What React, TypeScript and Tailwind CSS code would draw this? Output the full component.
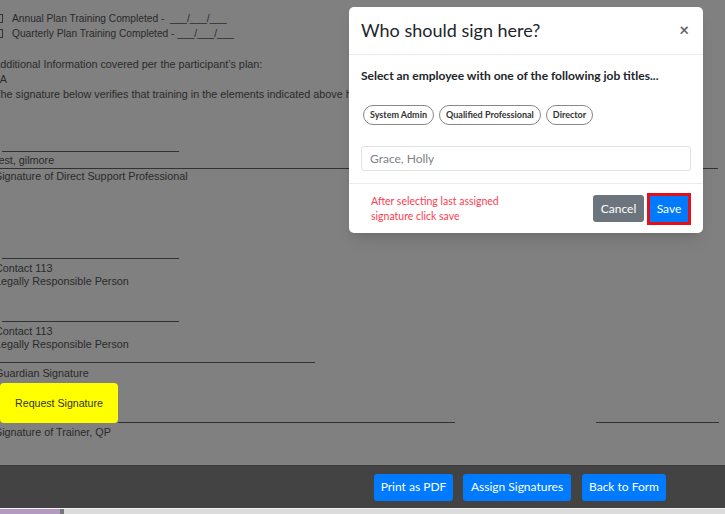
import React from 'react';

const lineClass = 'h-px bg-[#323232]';

function DocumentBody() {
  return (
    <div className="flex-1 -ml-[5px] pt-[11px] text-[10.8px] leading-[15px] text-[#2a2a2a]">
      <div className="-ml-[1px] flex items-center text-[10.2px]">
        <span className="h-[9px] w-[9px] border-[1.5px] border-[#333]" />
        <span className="ml-[9px]">Annual Plan Training Completed - &nbsp;___/___/___</span>
      </div>
      <div className="-ml-[1px] flex items-center text-[10.2px]">
        <span className="h-[9px] w-[9px] border-[1.5px] border-[#333]" />
        <span className="ml-[9px]">Quarterly Plan Training Completed - ___/___/___</span>
      </div>

      <div className="mt-[16px] -ml-[2px]">Additional Information covered per the participant’s plan:</div>
      <div className="-ml-[6px]">N/A</div>
      <div className="-ml-[1px] whitespace-nowrap">
        The signature below verifies that training in the elements indicated above has been completed and that all other requirements
      </div>

      <div className={`${lineClass} ml-[7px] mt-[49px] w-[177px]`} />
      <div className="w-[723px] border-b border-[#323232] pt-[1px]">
        <span className="-ml-[2px]">Test, gilmore</span>
      </div>
      <div>Signature of Direct Support Professional</div>

      <div className={`${lineClass} ml-[7px] mt-[74px] w-[177px]`} />
      <div className="pt-[3px] leading-[13px]">
        <div>Contact 113</div>
        <div>Legally Responsible Person</div>
      </div>

      <div className={`${lineClass} ml-[7px] mt-[33px] w-[177px]`} />
      <div className="pt-[3px] leading-[13px]">
        <div>Contact 113</div>
        <div>Legally Responsible Person</div>
      </div>

      <div className={`${lineClass} ml-[5px] mt-[11px] w-[315px]`} />
      <div className="pt-[3px] leading-[14px]">Guardian Signature</div>

      <div className="ml-[5px] mt-[3px] flex items-end">
        <button className="flex h-[40px] w-[118px] items-center justify-center rounded-[4px] bg-[#ffff00] text-[10.6px] text-[#333]">
          Request Signature
        </button>
        <div className={`${lineClass} w-[337px]`} />
        <div className={`${lineClass} ml-[141px] w-[123px]`} />
      </div>
      <div className="mt-[2px] leading-[14px]">Signature of Trainer, QP</div>
    </div>
  );
}

function SignModal() {
  const titles = ['System Admin', 'Qualified Professional', 'Director'];
  return (
    <div className="absolute left-[349px] top-[7px] w-[354px] rounded-[5px] bg-white font-['Lato',sans-serif] shadow-lg">
      <div className="flex h-[48px] items-center justify-between border-b border-[#e9ecef] pl-[12px] pr-[14px]">
        <h2 className="text-[18px] text-[#212529]">Who should sign here?</h2>
        <button className="-mt-[3px] text-[17px] font-bold leading-none text-[#666]">×</button>
      </div>
      <div className="px-[12px] pb-[12px] pt-[13px]">
        <p className="text-[12px] font-bold leading-[15px] text-[#212529]">
          Select an employee with one of the following job titles...
        </p>
        <div className="ml-[2px] mt-[22px] flex gap-[5px]">
          {titles.map((t) => (
            <span
              key={t}
              className="flex h-[20px] items-center rounded-full border border-[#888] px-[6px] text-[9px] font-bold text-[#333]"
            >
              {t}
            </span>
          ))}
        </div>
        <input
          className="mt-[21px] block h-[25px] w-full rounded-[3px] border border-[#dee2e6] px-[8px] text-[12px] text-[#495057] placeholder:text-[#7d8288] focus:outline-none"
          placeholder="Grace, Holly"
        />
      </div>
      <div className="flex h-[50px] items-center border-t border-[#e9ecef] pl-[22px] pr-[12px]">
        <p className="flex-1 text-[10.5px] leading-[15px] text-[#ff3b4e]">
          After selecting last assigned
          <br />
          signature click save
        </p>
        <button className="h-[27px] w-[51px] rounded-[3px] bg-[#6c757d] text-[12px] text-white">Cancel</button>
        <button className="ml-[3px] h-[32px] w-[44px] border-[3px] border-[#e3101c] bg-[#007bff] text-[12px] text-white">
          Save
        </button>
      </div>
    </div>
  );
}

export default function App() {
  return (
    <div className="relative flex h-[514px] w-[725px] flex-col overflow-hidden bg-[#808080] font-['Liberation_Sans',sans-serif]">
      <DocumentBody />
      <div className="flex h-[43px] items-center justify-end gap-[10px] border-t border-[#3a3a3a] bg-[#434343] pr-[59px] font-['Lato',sans-serif]">
        <button className="h-[27px] w-[79px] rounded-[3px] bg-[#007bff] text-[12px] text-white">Print as PDF</button>
        <button className="h-[27px] w-[108px] rounded-[3px] bg-[#007bff] text-[12px] text-white">Assign Signatures</button>
        <button className="ml-px h-[27px] w-[84px] rounded-[3px] bg-[#007bff] text-[12px] text-white">Back to Form</button>
      </div>
      <div className="flex h-[6px] border-t border-[#f2f2f2] bg-[#dcdcdc]">
        <div className="w-[60px] bg-[#b39ac0]" />
        <div className="w-[4px] bg-[#777]" />
      </div>
      <SignModal />
    </div>
  );
}
